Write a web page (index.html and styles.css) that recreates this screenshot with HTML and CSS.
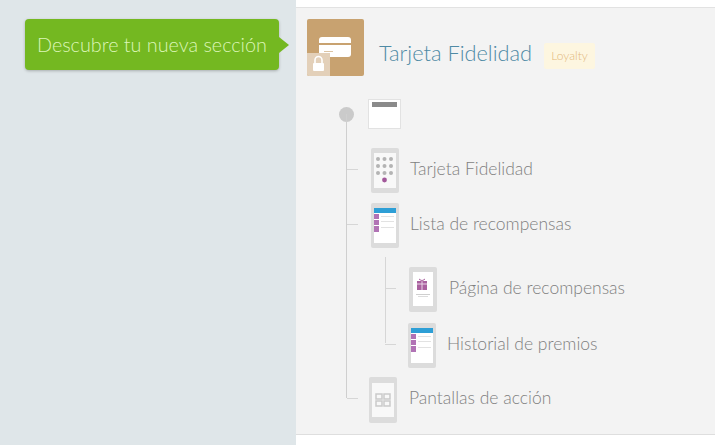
FILE: index.html
```html
<!DOCTYPE html>
<html lang="es">
<head>
    <meta charset="UTF-8">
    <title>Tarjeta Fidelidad</title>
    <link rel="stylesheet" href="styles.css">
</head>
<body>
    <div class="page">
        <aside class="sidebar">
            <div class="hint">Descubre tu nueva sección</div>
        </aside>
        <main class="panel">
            <div class="content">
                <header class="head">
                    <div class="app-icon">
                        <svg width="57" height="57" viewBox="0 0 57 57">
                            <rect x="12" y="18" width="32" height="20" rx="3" fill="#fff"/>
                            <rect x="12" y="24" width="32" height="2" fill="#c8a270"/>
                            <rect x="17" y="32" width="9" height="1" fill="#dcc4a4"/>
                            <rect x="0" y="34" width="23" height="23" fill="#e3d0b9"/>
                            <path d="M8 44v-3a3.5 3.5 0 0 1 7 0v3" fill="none" stroke="#fff" stroke-width="1.6"/>
                            <rect x="6" y="44" width="11" height="8" rx="1" fill="#fff"/>
                        </svg>
                    </div>
                    <h1 class="title">Tarjeta Fidelidad</h1>
                    <span class="badge">Loyalty</span>
                </header>

                <div class="tree">
                    <div class="root">
                        <span class="dot"></span>
                        <div class="thumb"><span class="thumb-bar"></span></div>
                    </div>

                    <div class="row row-card">
                        <svg class="phone" width="28" height="45" viewBox="0 0 28 45">
                            <rect width="28" height="45" rx="2" fill="#dcdcdc"/>
                            <rect x="3" y="5" width="22" height="35" fill="#f8f8f8"/>
                            <g fill="#b4b4b4">
                                <circle cx="7" cy="11" r="2"/><circle cx="13.5" cy="11" r="2"/><circle cx="20" cy="11" r="2"/>
                                <circle cx="7" cy="18" r="2"/><circle cx="13.5" cy="18" r="2"/><circle cx="20" cy="18" r="2"/>
                                <circle cx="7" cy="25" r="2"/><circle cx="13.5" cy="25" r="2"/><circle cx="20" cy="25" r="2"/>
                            </g>
                            <circle cx="13.5" cy="32" r="2.4" fill="#a2589a"/>
                        </svg>
                        <span class="label">Tarjeta Fidelidad</span>
                    </div>

                    <div class="row row-list">
                        <svg class="phone" width="28" height="45" viewBox="0 0 28 45">
                            <rect width="28" height="45" rx="2" fill="#dcdcdc"/>
                            <rect x="3" y="5" width="22" height="35" fill="#fff"/>
                            <rect x="3" y="5" width="22" height="5" fill="#2e9fd6"/>
                            <g fill="#b173b5"><rect x="3" y="11" width="5" height="5"/><rect x="3" y="17" width="5" height="5"/><rect x="3" y="23" width="5" height="6"/></g>
                            <g fill="#e2e2e2"><rect x="10" y="13" width="13" height="1"/><rect x="10" y="18" width="13" height="1"/><rect x="10" y="24" width="13" height="1"/></g>
                        </svg>
                        <span class="label">Lista de recompensas</span>
                    </div>

                    <div class="subtree">
                        <div class="row sub-gift">
                            <svg class="phone" width="28" height="45" viewBox="0 0 28 45">
                                <rect width="28" height="45" rx="2" fill="#dcdcdc"/>
                                <rect x="4" y="5" width="20" height="34" fill="#fff"/>
                                <rect x="8" y="14" width="10" height="9" fill="#a9619f"/>
                                <path d="M8 17h10M13 12v11" stroke="#e9d5e6" stroke-width="1"/>
                                <path d="M10 12l3 2 3-2" fill="none" stroke="#a9619f" stroke-width="1"/>
                                <rect x="7" y="27" width="14" height="1" fill="#cfcfcf"/>
                                <rect x="9" y="29" width="10" height="1" fill="#dcdcdc"/>
                            </svg>
                            <span class="label">Página de recompensas</span>
                        </div>
                        <div class="row sub-hist">
                            <svg class="phone" width="28" height="45" viewBox="0 0 28 45">
                                <rect width="28" height="45" rx="2" fill="#dcdcdc"/>
                                <rect x="3" y="5" width="22" height="35" fill="#fff"/>
                                <rect x="3" y="5" width="22" height="5" fill="#2e9fd6"/>
                                <g fill="#b173b5"><rect x="3" y="11" width="5" height="5"/><rect x="3" y="17" width="5" height="5"/><rect x="3" y="23" width="5" height="6"/></g>
                                <g fill="#e2e2e2"><rect x="10" y="13" width="13" height="1"/><rect x="10" y="18" width="13" height="1"/><rect x="10" y="24" width="13" height="1"/></g>
                            </svg>
                            <span class="label">Historial de premios</span>
                        </div>
                    </div>

                    <div class="row row-last">
                        <svg class="phone" width="28" height="46" viewBox="0 0 28 46">
                            <rect width="28" height="46" rx="2" fill="#dcdcdc"/>
                            <rect x="3" y="6" width="22" height="34" fill="#f8f8f8"/>
                            <g fill="none" stroke="#cacaca" stroke-width="1.5">
                                <rect x="7" y="17" width="6" height="5"/><rect x="15" y="17" width="6" height="5"/>
                                <rect x="7" y="24" width="6" height="5"/><rect x="15" y="24" width="6" height="5"/>
                            </g>
                        </svg>
                        <span class="label">Pantallas de acción</span>
                    </div>
                </div>
            </div>
        </main>
    </div>
</body>
</html>
```

FILE: styles.css
```css
html, body { margin: 0; height: 100%; }
body { font-family: Lato, "Open Sans", sans-serif; font-weight: 300; background-color: #fff; overflow: hidden; }
.page { display: flex; height: 445px; }

.sidebar { width: 296px; flex-shrink: 0; background-color: #dfe6e9; padding: 19px 0 0 25px; box-sizing: border-box; }
.hint { position: relative; width: 254px; height: 51px; line-height: 51px; box-sizing: border-box; padding-left: 12px; background-color: #74b821; color: #dcf6b8; font-size: 19.8px; border-radius: 4px; box-shadow: 0 1px 3px rgba(0,0,0,0.25); white-space: nowrap; }
.hint::after { content: ""; position: absolute; left: 100%; top: 18px; border-left: 10px solid #74b821; border-top: 8px solid transparent; border-bottom: 8px solid transparent; }

.panel { flex: 1; padding-top: 7px; box-sizing: border-box; background-color: #fff; }
.content { height: 428px; box-sizing: border-box; background-color: #f3f3f3; border-top: 1px solid #e2e2e2; border-bottom: 1px solid #dedede; padding: 11px 0 0 11px; }

.head { display: flex; align-items: center; height: 57px; }
.app-icon { width: 57px; height: 57px; background-color: #c8a270; border-radius: 2px; overflow: hidden; flex-shrink: 0; }
.app-icon svg { display: block; }
.title { font-size: 21.8px; font-weight: 300; color: #4f8aa5; margin: 10px 0 0 15px; white-space: nowrap; }
.badge { font-size: 12px; color: #e3b87b; background-color: #fdf6e0; border-radius: 2px; height: 26px; line-height: 26px; width: 51px; text-align: center; margin: 16px 0 0 12px; }

.tree { position: relative; margin-top: 23px; }
.tree::before { content: ""; position: absolute; left: 39px; top: 15px; height: 284px; width: 1px; background-color: #cfcfcf; }

.root { display: flex; align-items: center; height: 30px; padding-left: 32px; }
.dot { width: 15px; height: 15px; border-radius: 50%; background-color: #cacaca; margin-right: 14px; }
.thumb { width: 33px; height: 30px; box-sizing: border-box; background-color: #fff; border: 1px solid #e2e2e2; padding: 2px 3px; }
.thumb-bar { display: block; height: 5px; background-color: #8a8a8a; }

.row { position: relative; display: flex; align-items: center; }
.row::before { content: ""; position: absolute; height: 1px; background-color: #d6d6d6; width: 11px; top: 21px; }
.phone { display: block; flex-shrink: 0; }
.label { font-size: 17.5px; color: #7f7f7f; margin: 0 0 5px 11px; white-space: nowrap; }

.row-card { margin: 19px 0 0 64px; }
.row-card::before { left: -24px; }
.row-list { margin: 10px 0 0 64px; }
.row-list::before { left: -24px; }
.row-last { margin: 9px 0 0 62px; }
.row-last .label { margin-left: 12px; }
.row-last::before { left: -22px; }

.subtree { position: relative; padding-left: 102px; margin-top: 19px; }
.subtree::before { content: ""; position: absolute; left: 78px; top: -10px; height: 86px; width: 1px; background-color: #d6d6d6; }
.sub-gift .label { margin-left: 12px; }
.sub-gift::before { left: -24px; }
.sub-hist { margin: 11px 0 0 -1px; }
.sub-hist::before { left: -23px; }
```
